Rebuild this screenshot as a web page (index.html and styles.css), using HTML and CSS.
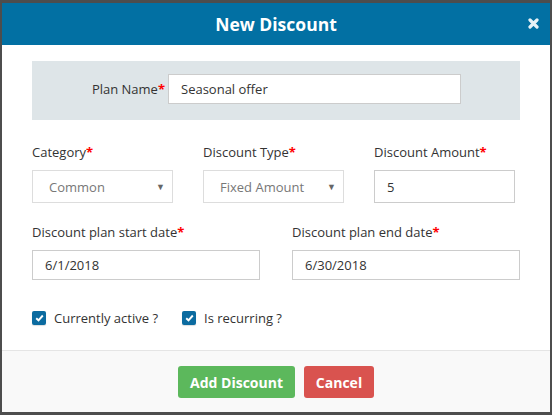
FILE: index.html
```html
<!DOCTYPE html>
<html lang="en">
<head>
<meta charset="UTF-8">
<title>New Discount</title>
<link rel="stylesheet" href="styles.css">
</head>
<body>

<div class="modal">
  <div class="modal-header">
    <h3 class="modal-title">New Discount</h3>
    <span class="close">
      <svg width="11" height="11" viewBox="0 0 11 11"><path d="M2 2 L9 9 M9 2 L2 9" stroke="#fff" stroke-width="3.2" stroke-linecap="round"/></svg>
    </span>
  </div>

  <div class="modal-body">
    <div class="plan-panel">
      <label class="plan-label">Plan Name<span class="req">*</span></label>
      <input type="text" class="field plan-input" value="Seasonal offer">
    </div>

    <div class="row row-three">
      <div class="group">
        <label>Category<span class="req">*</span></label>
        <div class="select">Common<span class="caret">&#9660;</span></div>
      </div>
      <div class="group">
        <label>Discount Type<span class="req">*</span></label>
        <div class="select">Fixed Amount<span class="caret">&#9660;</span></div>
      </div>
      <div class="group">
        <label>Discount Amount<span class="req">*</span></label>
        <input type="text" class="field" value="5">
      </div>
    </div>

    <div class="row row-two">
      <div class="group">
        <label>Discount plan start date<span class="req">*</span></label>
        <input type="text" class="field" value="6/1/2018">
      </div>
      <div class="group">
        <label>Discount plan end date<span class="req">*</span></label>
        <input type="text" class="field" value="6/30/2018">
      </div>
    </div>

    <div class="checks">
      <span class="check">
        <span class="box"><svg width="9" height="8" viewBox="0 0 9 8"><path d="M1.2 4.2 L3.5 6.3 L7.8 1.5" fill="none" stroke="#fff" stroke-width="1.9"/></svg></span>
        Currently active ?
      </span>
      <span class="check">
        <span class="box"><svg width="9" height="8" viewBox="0 0 9 8"><path d="M1.2 4.2 L3.5 6.3 L7.8 1.5" fill="none" stroke="#fff" stroke-width="1.9"/></svg></span>
        Is recurring ?
      </span>
    </div>
  </div>

  <div class="modal-footer">
    <button class="btn btn-add">Add Discount</button>
    <button class="btn btn-cancel">Cancel</button>
  </div>
</div>

</body>
</html>
```

FILE: styles.css
```css
/* modal styles */
body {
  margin: 0;
  padding: 3px 2px 3px 2px;
  background: #4d4d4d;
  font-family: "Open Sans", sans-serif;
  font-size: 13px;
  color: #333;
}

.modal {
  width: 548px;
  height: 409px;
  background: #fff;
  display: flex;
  flex-direction: column;
}

.modal-header {
  height: 42px;
  background: #0270a3;
  display: flex;
  align-items: center;
  justify-content: center;
  position: relative;
}

.modal-title {
  margin: 0 0 1px;
  color: #fff;
  font-size: 17.5px;
  font-weight: bold;
}

.close {
  position: absolute;
  right: 11px;
  top: 12px;
  opacity: 0.9;
}

.modal-body {
  flex: 1;
  padding: 16px 30px 0 30px;
}

.plan-panel {
  background: #dee5e8;
  padding: 13px 0 16px;
  display: flex;
  align-items: center;
}

.plan-label {
  width: 133px;
  padding-right: 3px;
  text-align: right;
}

.req {
  color: #f00;
  font-weight: bold;
}

.field {
  font-family: "Open Sans", sans-serif;
  font-size: 13px;
  color: #333;
  border: 1px solid #ccc;
  background: #fff;
  width: 100%;
  height: 30px;
  padding: 0 12px;
  box-sizing: border-box;
  outline: none;
}

.plan-input {
  width: 293px;
}

.row {
  display: grid;
}

.row-three {
  margin-top: 23px;
  grid-template-columns: 141px 141px 141px;
  column-gap: 30px;
}

.row-two {
  margin-top: 20px;
  grid-template-columns: 228px 228px;
  column-gap: 32px;
}

.group label {
  display: block;
  line-height: 18px;
  margin-bottom: 9px;
}

.row-three .field {
  height: 33px;
}

.select {
  height: 33px;
  border: 1px solid #ddd;
  box-sizing: border-box;
  padding-left: 16px;
  color: #777;
  display: flex;
  align-items: center;
  position: relative;
}

.caret {
  position: absolute;
  right: 7px;
  top: 9px;
  font-size: 9px;
  color: #666;
}

.checks {
  margin-top: 31px;
  display: flex;
  gap: 24px;
}

.check {
  display: flex;
  align-items: center;
  gap: 8px;
  line-height: 14px;
}

.box {
  width: 14px;
  height: 14px;
  border-radius: 2px;
  background: #0b6ba0;
  display: flex;
  align-items: center;
  justify-content: center;
  box-shadow: 0 1px 1px #ddd;
}

.modal-footer {
  height: 62px;
  border-top: 1px solid #e5e5e5;
  background: #f9f9f9;
  box-sizing: border-box;
  padding-top: 15px;
  display: flex;
  justify-content: center;
  gap: 9px;
}

.btn {
  height: 32px;
  border: none;
  border-radius: 3px;
  color: #fff;
  font-family: "Open Sans", sans-serif;
  font-size: 14px;
  font-weight: bold;
  padding: 0;
  white-space: nowrap;
}

.btn-add {
  background: #5cb85c;
  width: 117px;
}

.btn-cancel {
  background: #d9534f;
  width: 70px;
}
```
